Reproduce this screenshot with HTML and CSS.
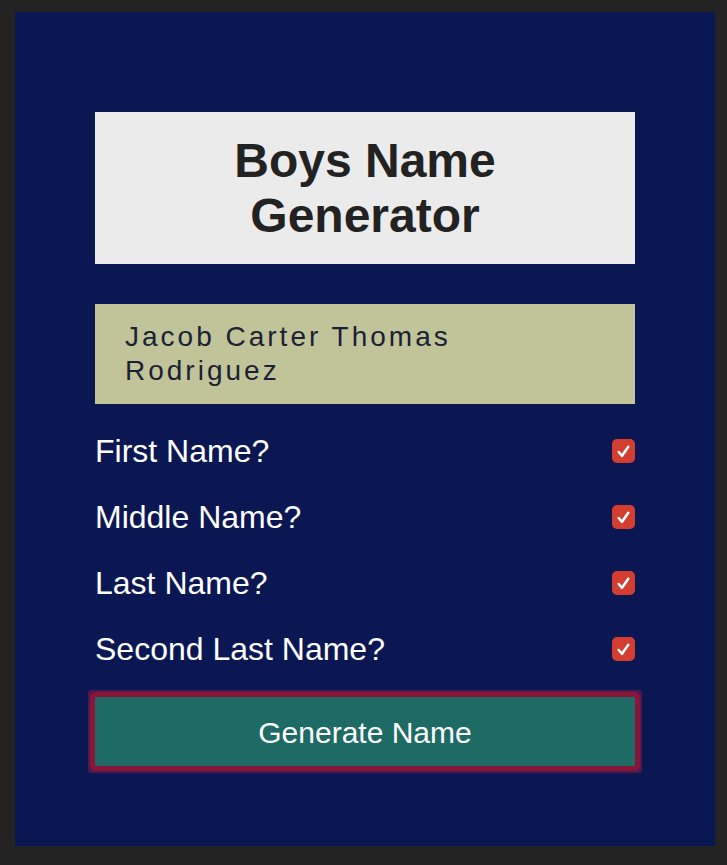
FILE: index.html
```html
<!DOCTYPE html>
<html>
<head>
<meta charset="utf-8">
<link rel="stylesheet" href="styles.css">
</head>
<body>
<main class="panel">
  <h1 class="title">Boys Name Generator</h1>
  <div class="result">Jacob Carter Thomas Rodriguez</div>
  <div class="option"><span class="label">First Name?</span><span class="check"><svg viewBox="0 0 24 24" width="23" height="23"><path d="M7 12.5 L10.5 16.5 L17 7" fill="none" stroke="#fff" stroke-width="2.6" stroke-linecap="round" stroke-linejoin="round"/></svg></span></div>
  <div class="option"><span class="label">Middle Name?</span><span class="check"><svg viewBox="0 0 24 24" width="23" height="23"><path d="M7 12.5 L10.5 16.5 L17 7" fill="none" stroke="#fff" stroke-width="2.6" stroke-linecap="round" stroke-linejoin="round"/></svg></span></div>
  <div class="option"><span class="label">Last Name?</span><span class="check"><svg viewBox="0 0 24 24" width="23" height="23"><path d="M7 12.5 L10.5 16.5 L17 7" fill="none" stroke="#fff" stroke-width="2.6" stroke-linecap="round" stroke-linejoin="round"/></svg></span></div>
  <div class="option"><span class="label">Second Last Name?</span><span class="check"><svg viewBox="0 0 24 24" width="23" height="23"><path d="M7 12.5 L10.5 16.5 L17 7" fill="none" stroke="#fff" stroke-width="2.6" stroke-linecap="round" stroke-linejoin="round"/></svg></span></div>
  <button class="generate">Generate Name</button>
</main>
</body>
</html>
```
FILE: styles.css
```css
html, body {
  margin: 0;
  background: #232323;
}
body {
  padding: 12px 12px 0 15px;
  font-family: "Liberation Sans", Arial, Helvetica, sans-serif;
}
.panel {
  box-sizing: border-box;
  width: 700px;
  height: 834px;
  background: #0b1753;
  padding: 100px 80px 0 80px;
  display: flex;
  flex-direction: column;
}
.title {
  margin: 0;
  background: #ebebeb;
  color: #222;
  font-size: 48px;
  font-weight: bold;
  line-height: 55px;
  text-align: center;
  padding: 21px 60px;
}
.result {
  margin-top: 40px;
  background: #c1c499;
  color: #1c1f36;
  font-size: 28px;
  letter-spacing: 3px;
  line-height: 34px;
  padding: 16px 30px;
  height: 68px;
}
.result + .option {
  margin-top: 14px;
}
.option {
  height: 66px;
  display: flex;
  align-items: center;
  justify-content: space-between;
}
.label {
  color: #fff;
  font-size: 32px;
}
.check {
  width: 23px;
  height: 24px;
  border-radius: 5px;
  background: #d23f31;
  display: flex;
  align-items: center;
  justify-content: center;
}
.check svg {
  display: block;
}
.generate {
  margin-top: 15px;
  height: 69px;
  width: 100%;
  background: #1d6b64;
  color: #fff;
  border: none;
  border-radius: 1px;
  font-family: "Liberation Sans", Arial, Helvetica, sans-serif;
  font-size: 30px;
  outline: 5px solid #8b1538;
  box-shadow: 0 0 0 7px #4e1a4e;
  padding: 3px 0 0 0;
}
```
